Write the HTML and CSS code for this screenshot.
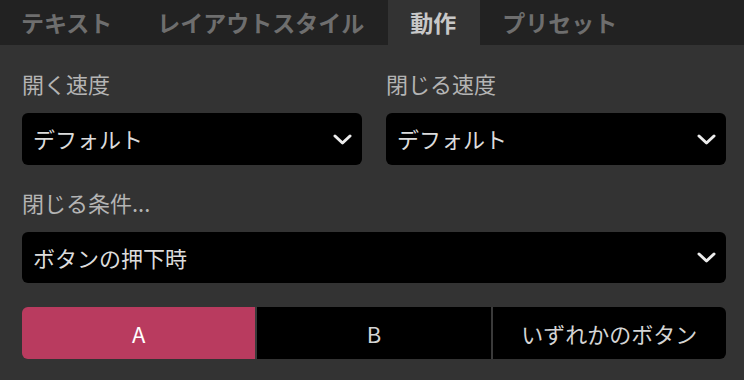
FILE: index.html
```html
<!DOCTYPE html>
<html lang="ja">
<head>
<meta charset="utf-8">
<link rel="stylesheet" href="styles.css">
</head>
<body>
<nav class="tabs">
  <div class="tab">テキスト</div>
  <div class="tab">レイアウトスタイル</div>
  <div class="tab active">動作</div>
  <div class="tab">プリセット</div>
</nav>
<main class="content">
  <div class="row">
    <div class="field">
      <div class="label">開く速度</div>
      <div class="select"><span>デフォルト</span><svg class="chev" width="19" height="11" viewBox="0 0 19 11"><polyline points="2,2 9.5,9 17,2"/></svg></div>
    </div>
    <div class="field">
      <div class="label">閉じる速度</div>
      <div class="select"><span>デフォルト</span><svg class="chev" width="19" height="11" viewBox="0 0 19 11"><polyline points="2,2 9.5,9 17,2"/></svg></div>
    </div>
  </div>
  <div class="field full">
    <div class="label">閉じる条件...</div>
    <div class="select wide"><span>ボタンの押下時</span><svg class="chev" width="19" height="11" viewBox="0 0 19 11"><polyline points="2,2 9.5,9 17,2"/></svg></div>
  </div>
  <div class="segmented">
    <div class="seg on">A</div>
    <div class="seg">B</div>
    <div class="seg">いずれかのボタン</div>
  </div>
</main>
</body>
</html>
```

FILE: styles.css
```css
html, body {
  margin: 0;
  padding: 0;
}
body {
  background: #333333;
  font-family: "Noto Sans CJK JP", "Noto Sans", sans-serif;
  width: 744px;
  height: 380px;
  overflow: hidden;
}
.tabs {
  display: flex;
  height: 45px;
  background: #222222;
  gap: 1px;
}
.tab {
  display: flex;
  align-items: center;
  padding: 0 23px 0 21px;
  font-size: 23px;
  font-weight: 700;
  color: #6e6e6e;
  line-height: 1;
}
.tab.active {
  background: #333333;
  color: #c8c8c8;
  padding: 0 24px 0 22px;
}
.content {
  padding: 25px 18px 0 22px;
}
.row {
  display: grid;
  grid-template-columns: 1fr 1fr;
  column-gap: 24px;
}
.label {
  font-size: 22px;
  line-height: 26px;
  color: #b4b4b4;
  margin-bottom: 17px;
}
.field.full {
  margin-top: 24px;
}
.select {
  height: 52px;
  background: #000;
  border-radius: 6px;
  display: flex;
  align-items: center;
  justify-content: space-between;
  padding: 0 10px 0 11px;
  font-size: 22px;
  color: #dcdcdc;
}
.select span {
  position: relative;
  top: -1px;
}
.select.wide {
  height: 51px;
}
.chev polyline {
  fill: none;
  stroke: #ececec;
  stroke-width: 3;
  stroke-linecap: round;
  stroke-linejoin: round;
}
.segmented {
  margin-top: 24px;
  display: grid;
  grid-template-columns: 1fr 1fr 1fr;
  gap: 2px;
  background: #3a3a3a;
  border-radius: 6px;
  overflow: hidden;
  height: 52px;
}
.seg {
  background: #000;
  display: flex;
  align-items: center;
  justify-content: center;
  font-size: 22px;
  color: #d4d4d4;
}
.seg.on {
  background: #b93b5f;
  color: #ffffff;
}
```
